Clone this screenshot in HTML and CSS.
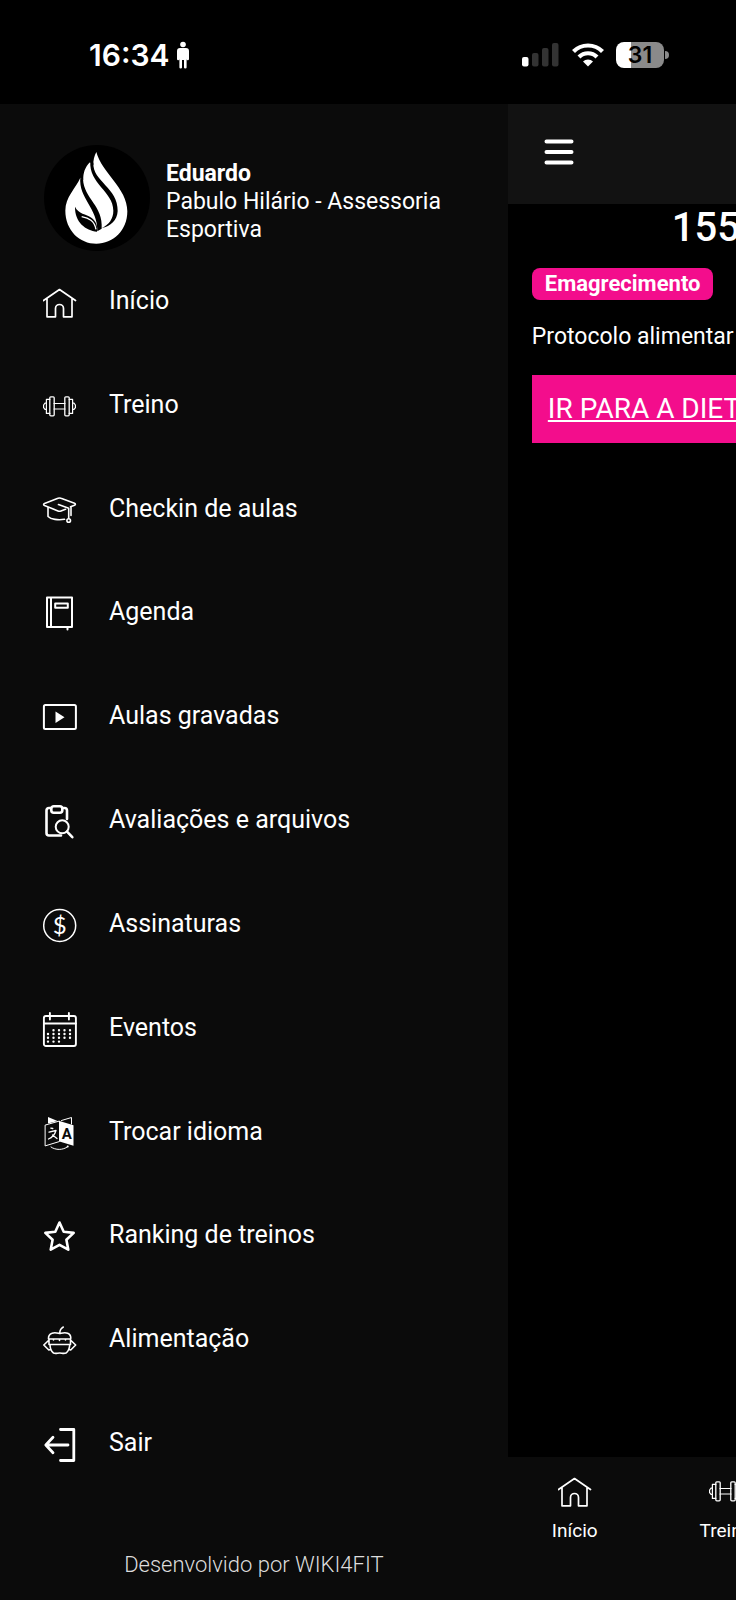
FILE: index.html
```
<!DOCTYPE html>
<html lang="pt-BR">
<head>
    <meta charset="UTF-8">
    <meta name="viewport" content="width=device-width, initial-scale=1.0">
    <title>Menu</title>
    <link rel="stylesheet" href="styles.css">
</head>
<body>
    <!-- Shared icons -->
    <svg class="icon-defs" aria-hidden="true">
        <symbol id="icon-home" viewBox="0 0 34 34">
            <path d="M.5 14.5 16.5 3.5l16 11M4 12.5v18.3h8.5v-8.3a4 4 0 0 1 8 0v8.3H29V12.5" stroke-width="1.7"/>
        </symbol>
        <symbol id="icon-dumbbell" viewBox="0 0 34 34">
            <path d="M6.8 9.4H3.4v14h3.4M3.4 13.2H2L.6 15v2.6L2 19.4h1.4M26.2 9.4h3.4v14h-3.4M29.6 13.2H31l1.4 1.8v2.6L31 19.4h-1.4M11 13.5h11M11 19h11" stroke-width="1.2"/>
            <rect x="6.8" y="6.8" width="4.4" height="19" rx="1" stroke-width="1.3"/>
            <rect x="21.8" y="6.8" width="4.4" height="19" rx="1" stroke-width="1.3"/>
        </symbol>
    </svg>

    <div class="status-bar">
        <div class="status-left">
            <span class="clock">16:34</span>
            <svg class="person" viewBox="0 0 14 28" width="14" height="28" aria-hidden="true">
                <circle cx="7" cy="3.5" r="2.8"/>
                <path d="M4 7h6q3 0 3 3v8q0 1.2-1.2 1.2T10.6 18v8.5q0 1-1.3 1T8 26.5V19H6v7.5q0 1-1.3 1t-1.3-1V18q0 1.2-1.2 1.2T1 18v-8q0-3 3-3z"/>
            </svg>
        </div>
        <div class="status-right">
            <svg viewBox="0 0 38 26" width="38" height="26" aria-hidden="true">
                <rect x="0" y="15" width="6.5" height="9.5" rx="2" fill="#fff"/>
                <g fill="#333">
                    <rect x="10" y="11" width="6.5" height="13.5" rx="2"/>
                    <rect x="20" y="6" width="6.5" height="18.5" rx="2"/>
                    <rect x="30" y="1" width="6.5" height="23.5" rx="2"/>
                </g>
            </svg>
            <svg viewBox="0 0 32 26" width="32" height="26" fill="none" stroke="#fff" stroke-width="4.2" aria-hidden="true">
                <path d="M1.5 9.5a20.5 20.5 0 0 1 29 0M7 15a12.7 12.7 0 0 1 18 0"/>
                <path d="M16 24.500l-5-5a7 7 0 0 1 10 0z" fill="#fff" stroke="none"/>
            </svg>
            <div class="battery"><span class="battery-level">31</span></div>
        </div>
    </div>

    <div class="app">
        <aside class="drawer">
            <div class="profile">
                <svg class="avatar" viewBox="42 45 318 318" aria-hidden="true">
                    <circle cx="201" cy="204" r="159"/>
                    <path fill="#fff" d="M199 66c16 62 93 108 93 178 0 58-43 97-93 97s-93-40-93-99c0-41 31-67 45-99l9 7c-1-20 5-39 20-53l10 9c-1-15 3-28 9-40z"/>
                    <path d="M181 94l9 4c-3 56 75 75 73 145-1 27-21 46-48 51 22-10 35-28 35-52 0-58-74-80-69-148z"/>
                    <path d="M151 142l8 6c3 58 61 80 56 148l-13 8c2-70-57-98-51-162z"/>
                    <path d="M135 230c10 22 34 22 49 33 14 10 19 24 17 42-34-4-67-28-66-75z"/>
                    <path fill="none" stroke="#fff" stroke-width="4" d="M155 260c22 4 38 12 43 38"/>
                </svg>
                <div class="profile-text">
                    <strong>Eduardo</strong>
                    <p>Pabulo Hilário - Assessoria Esportiva</p>
                </div>
            </div>

            <nav class="menu">
                <a href="#">
                    <svg class="icon"><use href="#icon-home"/></svg>
                    <span>Início</span>
                </a>
                <a href="#">
                    <svg class="icon"><use href="#icon-dumbbell"/></svg>
                    <span>Treino</span>
                </a>
                <a href="#">
                    <svg class="icon" viewBox="0 0 34 34" stroke-width="1.6">
                        <path d="M15 4.300q1.500-.6 3 0l13.500 5q1.800.9 0 1.900l-4 1.500M22.500 15.300l-4.500 1.600q-1.500.6-3 0L1.500 11.500q-1.800-1.200 0-2L15 4.300M5 13.300V22.500c3 2.800 10 4 16.500 2.800M15.500 10.600l10.200 3.700v10M28 13v8.500"/>
                        <circle cx="25.7" cy="26.5" r="1.8"/>
                    </svg>
                    <span>Checkin de aulas</span>
                </a>
                <a href="#">
                    <svg class="icon" viewBox="0 0 34 34" stroke-width="2">
                        <path d="M4 .5h25v29.500H4zM8 .5v29.500M12.200 6.500h12.600v4.300H12.200zM24.500 30v2.500"/>
                    </svg>
                    <span>Agenda</span>
                </a>
                <a href="#">
                    <svg class="icon" viewBox="0 0 34 34" stroke-width="2">
                        <rect x=".9" y="4" width="32" height="24" rx="1.5"/>
                        <path class="solid" d="M12.5 10.5v11.500l9-5.750z"/>
                    </svg>
                    <span>Aulas gravadas</span>
                </a>
                <a href="#">
                    <svg class="icon" viewBox="0 0 34 34" stroke-width="2.6">
                        <path d="M8 3H6Q3.5 3 3.5 5.500v22.500Q3.500 30.500 6 30.500h12M19.500 3h2Q24 3 24 5.500V14"/>
                        <rect x="8.300" y="1.200" width="11" height="6.500" rx="2.500"/>
                        <circle cx="19.200" cy="21.800" r="6.500" stroke-width="2"/>
                        <path d="M24 26.700l5.300 5.500"/>
                    </svg>
                    <span>Avaliações e arquivos</span>
                </a>
                <a href="#">
                    <svg class="icon" viewBox="0 0 34 34" stroke-width="1.500">
                        <circle cx="16.700" cy="16.500" r="16"/>
                        <text class="coin" x="16.700" y="24.500" text-anchor="middle">$</text>
                    </svg>
                    <span>Assinaturas</span>
                </a>
                <a href="#">
                    <svg class="icon" viewBox="0 0 34 34" stroke-width="1.900">
                        <rect x=".9" y="3" width="32" height="30" rx="2"/>
                        <path d="M1 10.500h32M6.900 0v6.500M25.900 0v6.500"/>
                        <path stroke-dasharray="0 5.500" stroke-width="2.400" d="M10.500 17.200h17M5 21h22.500M5 24.800h22.500M5 28.600h11.500"/>
                    </svg>
                    <span>Eventos</span>
                </a>
                <a href="#">
                    <svg class="icon" viewBox="0 0 34 34" stroke-width="1">
                        <path class="solid" d="M5 0v6.500l9.500-2.500zM16.500 4l14 4.200v20.600l-14-4.300z"/>
                        <path d="M2.500 8l14-4v20.500l-14 4.300zM18.500 3.500L28.500.5v6.500M8 30c4.500 3.300 12 3.300 16.500-.2"/>
                        <path stroke-width="1.300" d="M7.800 11.200l2 .3M6 15.200l7-1.700c-1 3.500-4 7-7.500 8.500M9.500 18l4.500 3.500"/>
                        <circle class="solid" cx="24.700" cy="29.500" r="1"/>
                        <text class="letter" x="23.700" y="21.500" text-anchor="middle">A</text>
                    </svg>
                    <span>Trocar idioma</span>
                </a>
                <a href="#">
                    <svg class="icon" viewBox="0 0 34 34" stroke-width="2.600">
                        <path d="M16.500 2.500l4.200 9.200 10 1.200-7.300 6.900 1.900 9.900-8.800-4.900-8.800 4.900 1.900-9.900-7.300-6.900 10-1.200z"/>
                    </svg>
                    <span>Ranking de treinos</span>
                </a>
                <a href="#">
                    <svg class="icon" viewBox="0 0 34 34" stroke-width="1.600">
                        <path d="M16.700 9c.2-3 1.300-4.800 3.600-6M9 9.200c3-1.200 5.500-.2 7.700.3 2.500-.5 5-1.500 8-.3 3 1.300 3.300 3.800 3 5.800H5.500c-.2-2.500.5-4.700 3.500-5.800zM6 15v5.500h21.500V15M10.500 15v1M16.500 15v1.500M22.500 15v1M7 20.500c0 4 1.500 7 3.500 8.500 2 1 4 0 6.200 0s4 1 6.300 0c2.200-1.500 3.500-4.500 3.800-8.500M5.500 16.500L.8 21l5 5 1.500-.5M28 16.500L32.700 21l-5 5-1.500-.5"/>
                    </svg>
                    <span>Alimentação</span>
                </a>
                <a href="#">
                    <svg class="icon" viewBox="0 0 34 34" stroke-width="2.800">
                        <path d="M17.500 1.500h13.300v31H17.500M3.300 17H25M10 9.300L2.800 17l7.200 7.700"/>
                    </svg>
                    <span>Sair</span>
                </a>
            </nav>

            <p class="credits">Desenvolvido por WIKI4FIT</p>
        </aside>

        <!-- Page pushed aside by the open menu -->
        <div class="page">
            <header class="top-bar">
                <button class="menu-button" type="button" aria-label="Menu">
                    <svg viewBox="0 0 30 26" width="30" height="26" stroke="#fff" stroke-width="4" stroke-linecap="round" aria-hidden="true">
                        <path d="M2.500 2.500h25M2.500 13h25M2.500 23.500h25"/>
                    </svg>
                </button>
            </header>

            <main class="content">
                <h1>155</h1>
                <span class="badge">Emagrecimento</span>
                <p>Protocolo alimentar</p>
                <a class="diet-link" href="#">IR PARA A DIETA</a>
            </main>

            <nav class="tab-bar">
                <a href="#">
                    <svg class="icon"><use href="#icon-home"/></svg>
                    <span>Início</span>
                </a>
                <a href="#">
                    <svg class="icon"><use href="#icon-dumbbell"/></svg>
                    <span>Treino</span>
                </a>
            </nav>
        </div>
    </div>
</body>
</html>
```
FILE: styles.css
```
/* General Reset */
* { margin: 0; padding: 0; box-sizing: border-box; }
body { display: flex; flex-direction: column; height: 100vh; overflow: hidden; background-color: #000; color: #fff; font-family: Roboto, Arial, sans-serif; font-size: 23px; line-height: 28px; }
a { color: inherit; text-decoration: none; }
.icon-defs { display: none; }
.icon { width: 34px; height: 34px; flex: none; fill: none; stroke: #fff; overflow: visible; stroke-linecap: round; stroke-linejoin: round; }
.icon .solid { fill: #fff; stroke: none; }
.icon .coin { fill: #fff; stroke: none; font: 24px Lato, sans-serif; }
.icon .letter { fill: #0b0b0b; stroke: none; font: bold 15px Roboto, sans-serif; }

/* Status bar */
.status-bar { display: flex; justify-content: space-between; align-items: center; flex: none; height: 104px; padding: 6px 67px 0 89px; }
.status-left { display: flex; align-items: center; gap: 6px; }
.clock { font-family: Inter, sans-serif; font-size: 30px; font-weight: 600; }
.person { fill: #fff; }
.status-right { display: flex; align-items: center; gap: 12px; }
.battery { position: relative; width: 48px; height: 26px; border-radius: 8px; background: linear-gradient(to right, #fff 31%, #8a8a8a 31%); margin-right: 5px; }
.battery::after { content: ""; position: absolute; right: -5px; top: 9px; width: 4px; height: 8px; border-radius: 0 4px 4px 0; background-color: #8a8a8a; }
.battery-level { display: block; text-align: center; color: #000; font-family: Inter, sans-serif; font-size: 23px; font-weight: 600; line-height: 26px; }

/* Side menu */
.app { display: flex; flex: 1; min-height: 0; }
.drawer { display: flex; flex-direction: column; flex: 0 0 69%; background-color: #0b0b0b; }
.profile { display: flex; align-items: center; gap: 16px; padding: 41px 44px 0; }
.avatar { flex: none; width: 106px; height: 106px; }
.profile-text { padding-top: 8px; }
.profile-text strong { display: block; }
.menu { display: flex; flex-direction: column; flex: 1; font-size: 25px; }
.menu a { display: flex; align-items: center; flex: 1; gap: 32px; padding: 0 43px; }
.menu span { padding-bottom: 4px; }
.credits { padding: 54px 0 21px; text-align: center; font-size: 22px; font-weight: 300; color: #ddd; }

/* Page */
.page { display: flex; flex-direction: column; flex: 0 0 100%; }
.top-bar { display: flex; align-items: center; height: 100px; padding: 0 36px 4px; background-color: #121212; }
.menu-button { display: flex; background: none; border: none; cursor: pointer; }
.content { flex: 1; padding: 0 24px; }
.content h1 { padding-left: 140px; font-size: 40px; font-weight: 500; line-height: 48px; margin-bottom: 16px; }
.badge { display: block; width: fit-content; padding: 0 13px; border-radius: 8px; background-color: #f30d8c; font-size: 22px; font-weight: 700; line-height: 32px; margin-bottom: 23px; }
.content p { margin-bottom: 24px; }
.diet-link { display: block; padding: 16px; background-color: #f30d8c; font-size: 28px; line-height: 36px; text-decoration: underline; }
.tab-bar { display: flex; gap: 102px; height: 143px; padding: 18px 44px; background-color: #0b0b0b; }
.tab-bar a { display: flex; flex-direction: column; align-items: center; gap: 8px; font-size: 19px; }
```
